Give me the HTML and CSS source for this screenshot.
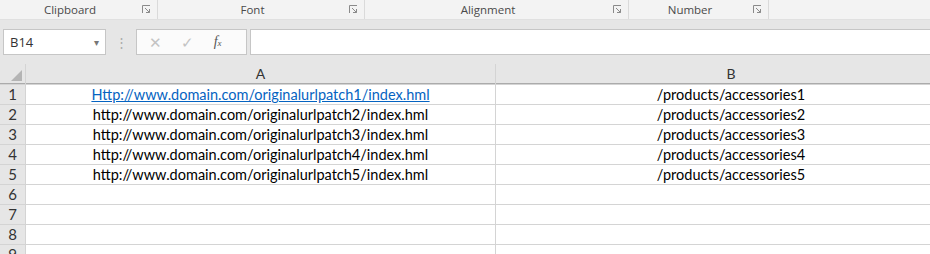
FILE: index.html
```html
<!DOCTYPE html>
<html>
<head>
<title>Redirect list</title>
<link rel="stylesheet" href="styles.css">
</head>
<body>

<div class="ribbon">
  <div class="group g-clip"><span class="glabel">Clipboard</span><span class="launch"><svg width="9" height="9" viewBox="0 0 9 9"><path d="M0.5 8V0.5H8" fill="none" stroke="#8a8a8a"/><path d="M3 3L7.5 7.5M7.5 4V7.5H4" fill="none" stroke="#8a8a8a"/></svg></span></div>
  <div class="group g-font"><span class="glabel">Font</span><span class="launch"><svg width="9" height="9" viewBox="0 0 9 9"><path d="M0.5 8V0.5H8" fill="none" stroke="#8a8a8a"/><path d="M3 3L7.5 7.5M7.5 4V7.5H4" fill="none" stroke="#8a8a8a"/></svg></span></div>
  <div class="group g-align"><span class="glabel">Alignment</span><span class="launch"><svg width="9" height="9" viewBox="0 0 9 9"><path d="M0.5 8V0.5H8" fill="none" stroke="#8a8a8a"/><path d="M3 3L7.5 7.5M7.5 4V7.5H4" fill="none" stroke="#8a8a8a"/></svg></span></div>
  <div class="group g-num"><span class="glabel">Number</span><span class="launch"><svg width="9" height="9" viewBox="0 0 9 9"><path d="M0.5 8V0.5H8" fill="none" stroke="#8a8a8a"/><path d="M3 3L7.5 7.5M7.5 4V7.5H4" fill="none" stroke="#8a8a8a"/></svg></span></div>
  <div class="group g-rest"></div>
</div>

<div class="formulabar">
  <div class="namebox"><span>B14</span><span class="dd">&#9662;</span></div>
  <div class="grip">&#8942;</div>
  <div class="fxbox">
    <span class="fxbtn x">&#10005;</span>
    <span class="fxbtn ok">&#10003;</span>
    <span class="fxbtn fx"><i>f<small>x</small></i></span>
  </div>
  <div class="formula"></div>
</div>

<div class="sheet">
  <div class="corner"><span class="tri"></span></div>
  <div class="colhead">A</div>
  <div class="colhead">B</div>

  <div class="rowhead">1</div>
  <div class="cell"><a href="#">Http://www.domain.com/originalurlpatch1/index.hml</a></div>
  <div class="cell">/products/accessories1</div>

  <div class="rowhead">2</div>
  <div class="cell">http://www.domain.com/originalurlpatch2/index.hml</div>
  <div class="cell">/products/accessories2</div>

  <div class="rowhead">3</div>
  <div class="cell">http://www.domain.com/originalurlpatch3/index.hml</div>
  <div class="cell">/products/accessories3</div>

  <div class="rowhead">4</div>
  <div class="cell">http://www.domain.com/originalurlpatch4/index.hml</div>
  <div class="cell">/products/accessories4</div>

  <div class="rowhead">5</div>
  <div class="cell">http://www.domain.com/originalurlpatch5/index.hml</div>
  <div class="cell">/products/accessories5</div>

  <div class="rowhead">6</div>
  <div class="cell"></div>
  <div class="cell"></div>

  <div class="rowhead">7</div>
  <div class="cell"></div>
  <div class="cell"></div>

  <div class="rowhead">8</div>
  <div class="cell"></div>
  <div class="cell"></div>

  <div class="rowhead">9</div>
  <div class="cell"></div>
  <div class="cell"></div>
</div>

</body>
</html>
```

FILE: styles.css
```css
body {
   margin : 0;
   width : 930px;
   height : 254px;
   overflow : hidden;
   background-color : #e6e6e6;
   font-family : "Open Sans", "Noto Sans", sans-serif;
}

/* ribbon group captions */
.ribbon {
   display : flex;
   height : 19px;
   background-color : #f3f3f3;
   border-bottom : 1px solid #e0e0e0;
}

.group {
   display : flex;
   align-items : center;
   border-right : 1px solid #dadada;
   box-sizing : border-box;
   height : 19px;
}

.g-clip  { width : 158px; }
.g-font  { width : 207px; }
.g-align { width : 264px; }
.g-num   { width : 140px; }
.g-rest  { flex : 1; border-right : none; }

.glabel {
   flex : 1;
   text-align : center;
   font-size : 11.5px;
   color : #4a4a4a;
   padding-left : 2px;
}

.launch {
   width : 9px;
   height : 9px;
   margin : 0 6px 0 4px;
   display : flex;
}

/* name box and formula bar */
.formulabar {
   display : flex;
   align-items : stretch;
   height : 26px;
   margin-top : 9px;
   padding-left : 3px;
}

.namebox {
   width : 103px;
   background-color : #fff;
   border : 1px solid #c6c6c6;
   box-sizing : border-box;
   display : flex;
   align-items : center;
   justify-content : space-between;
   padding : 0 6px 0 6px;
   font-size : 13px;
   color : #333;
}

.namebox .dd {
   font-size : 10px;
   color : #777;
}

.grip {
   width : 30px;
   text-align : center;
   color : #aaa;
   font-size : 13px;
   line-height : 26px;
}

.fxbox {
   width : 111px;
   background-color : #fbfbfb;
   border : 1px solid #c6c6c6;
   box-sizing : border-box;
   display : flex;
   align-items : center;
   padding-left : 12px;
}

.fxbtn {
   width : 37px;
   font-size : 15px;
}

.x, .ok {
   color : #c3c3c3;
}

.fx {
   font-family : "Liberation Serif", serif;
   color : #555;
   font-size : 14px;
}

.fx small {
   font-size : 9px;
}

.formula {
   flex : 1;
   margin-left : 3px;
   background-color : #fff;
   border : 1px solid #c6c6c6;
   border-right : none;
}

/* grid */
.sheet {
   margin-top : 9px;
   display : grid;
   grid-template-columns : 25px 469px 470px;
   grid-auto-rows : 19px;
   grid-template-rows : 20px;
   column-gap : 1px;
   row-gap : 1px;
   background-color : #d4d4d4;
   font-family : "Lato", "Liberation Sans", sans-serif;
   font-size : 14.5px;
}

.corner {
   background-color : #e6e6e6;
   border-bottom : 1px solid #ababab;
   position : relative;
}

.tri {
   position : absolute;
   right : 3px;
   bottom : 2px;
   width : 0;
   height : 0;
   border-left : 11px solid transparent;
   border-bottom : 11px solid #b4b4b4;
}

.colhead {
   background-color : #e6e6e6;
   border-bottom : 1px solid #ababab;
   text-align : center;
   color : #333;
   font-size : 14px;
   line-height : 20px;
}

.rowhead {
   background-color : #e6e6e6;
   color : #333;
   text-align : center;
   font-size : 15px;
   line-height : 19px;
}

.cell {
   background-color : #fff;
   color : #000;
   text-align : center;
   line-height : 19px;
   white-space : nowrap;
}

.cell a {
   color : #0563c1;
   text-decoration : underline;
}
```
